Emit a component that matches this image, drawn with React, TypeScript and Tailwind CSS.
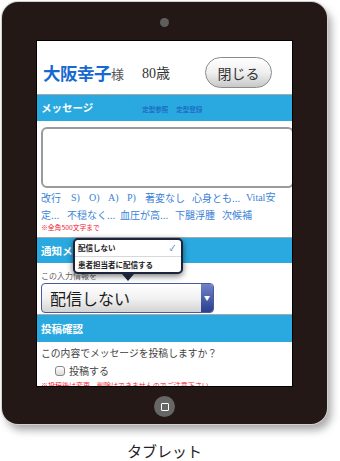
import React from "react";

const jp = { fontFamily: '"Noto Sans CJK JP", "Noto Sans", sans-serif' };
const serifJp = { fontFamily: '"Liberation Serif", "Noto Sans CJK JP", serif' };

function Bar({ title, children, h }: { title: string; children?: React.ReactNode; h: string }) {
  return (
    <div className="flex flex-col">
      <div className="h-[1px] bg-[#a8a8a8]" />
      <div className={`${h} bg-[#2aa9e0] flex items-center pl-[4px]`}>
        <span className="text-[10.5px] font-bold text-white leading-[14px] whitespace-nowrap">{title}</span>
        {children}
      </div>
    </div>
  );
}

export default function App() {
  const row1: [string, string, boolean][] = [
    ["改行", "w-[30px]", false],
    ["S)", "w-[18px]", true],
    ["O)", "w-[19px]", true],
    ["A)", "w-[19px]", true],
    ["P)", "w-[18px]", true],
    ["著変なし", "w-[47px]", false],
    ["心身とも...", "w-[54px]", false],
    ["Vital安", "", true],
  ];
  const row2: [string, string][] = [
    ["定...", "w-[26px]"],
    ["不穏なく...", "w-[53px]"],
    ["血圧が高...", "w-[55px]"],
    ["下腿浮腫", "w-[47px]"],
    ["次候補", ""],
  ];
  return (
    <div className="w-[340px] h-[461px] bg-white overflow-hidden" style={jp}>
      <div className="ml-[2px] mt-[2px] w-[325px] h-[422px] rounded-[16px] bg-[#231815] shadow-[0_0_0_1px_#d0d0d0,4px_6px_8px_rgba(0,0,0,0.35)] flex flex-col items-center">
        <div className="mt-[16px] w-[9px] h-[9px] rounded-full bg-[#5e5e5e]" />
        <div className="mt-[13px] w-[257px] h-[347px] border border-black bg-white overflow-hidden relative flex flex-col">
          {/* header */}
          <div className="h-[53px] shrink-0 flex items-center pt-[10px] pl-[6px]">
            <span className="text-[17.5px] font-bold text-[#1769cf] leading-none tracking-[-0.5px]">大阪幸子</span>
            <span className="text-[13px] text-[#555] leading-none mt-[2px]">様</span>
            <span className="ml-[18px] text-[14px] text-[#333] leading-none mt-[2px]" style={serifJp}>80歳</span>
            <div className="ml-auto mr-[20px] w-[67px] h-[31px] rounded-full border border-[#8a8a8a] bg-gradient-to-b from-white via-[#f0f0f0] to-[#c8c8c8] flex items-center justify-center shadow-[inset_0_1px_0_#fff]">
              <span className="text-[14px] text-[#333] leading-none">閉じる</span>
            </div>
          </div>

          <Bar title="メッセージ" h="h-[26px]">
            <div className="ml-[49px] flex gap-[8px] text-[6.5px] font-bold text-[#1f6fc4] leading-none mt-[3px]">
              <span>定型参照</span>
              <span>定型登録</span>
            </div>
          </Bar>

          <div className="pl-[4px] flex flex-col">
            <div className="mt-[6px] w-[253px] h-[61px] border-2 border-[#9a9a9a] rounded-[6px] bg-white" />
            <div className="mt-[1px] h-[17px] flex items-center text-[10px] text-[#3b82d6] leading-none whitespace-nowrap">
              {row1.map(([t, w, s]) => (
                <span key={t} className={`${w} shrink-0`} style={s ? serifJp : undefined}>
                  {t}
                </span>
              ))}
            </div>
            <div className="h-[17px] flex items-center text-[10px] text-[#3b82d6] leading-none whitespace-nowrap">
              {row2.map(([t, w]) => (
                <span key={t} className={`${w} shrink-0`}>
                  {t}
                </span>
              ))}
            </div>
            <div className="h-[9px] flex items-center text-[6.8px] text-[#ee2233] leading-none whitespace-nowrap">
              ※全角500文字まで
            </div>
          </div>

          <div className="mt-[5px]">
            <Bar title="通知メール" h="h-[25px]" />
          </div>

          <div className="pl-[4px] flex flex-col">
            <div className="mt-[8px] h-[10px] flex items-center text-[8px] text-[#666] leading-none">この入力情報を</div>
            <div className="mt-[2px] w-[173px] h-[30px] rounded-[4px] border border-[#4a5a9a] bg-gradient-to-b from-white via-[#f2f2f2] to-[#d4d4d4] flex items-stretch overflow-hidden">
              <div className="flex-1 flex items-center pl-[8px]">
                <span className="text-[16px] text-[#1a1a1a] leading-none">配信しない</span>
              </div>
              <div className="w-[12px] bg-gradient-to-b from-[#7182c8] to-[#2b3f8e] flex items-center justify-center">
                <span className="text-[6px] text-white leading-none">▼</span>
              </div>
            </div>
          </div>

          <div className="mt-[1px]">
            <Bar title="投稿確認" h="h-[27px]" />
          </div>

          <div className="pl-[4px] flex flex-col">
            <div className="mt-[5px] h-[14px] flex items-center text-[9.8px] text-[#444] leading-none whitespace-nowrap">
              この内容でメッセージを投稿しますか？
            </div>
            <div className="mt-[3px] h-[14px] flex items-center pl-[14px]">
              <div className="w-[10px] h-[10px] rounded-[3px] border border-[#888] bg-gradient-to-b from-white to-[#dcdcdc]" />
              <span className="ml-[4px] text-[10px] text-[#444] leading-none">投稿する</span>
            </div>
            <div className="mt-[2px] h-[10px] flex items-center text-[7px] text-[#ee2233] leading-none whitespace-nowrap">
              ※投稿後は変更、削除はできませんのでご注意下さい
            </div>
          </div>

          {/* popup */}
          <div className="absolute left-[36px] top-[197px] w-[110px] rounded-[5px] border-2 border-[#1b2438] bg-white shadow-[0_2px_6px_rgba(0,0,0,0.55)] flex flex-col">
            <div className="h-[16px] flex items-center justify-between pl-[3px] pr-[6px]">
              <span className="text-[7.5px] font-bold text-[#222] leading-none">配信しない</span>
              <span className="text-[8px] text-[#3060c0] leading-none">✓</span>
            </div>
            <div className="h-[1px] bg-[#d8d8d8]" />
            <div className="h-[15px] flex items-center pl-[3px]">
              <span className="text-[7.5px] font-bold text-[#222] leading-none whitespace-nowrap">患者担当者に配信する</span>
            </div>
            <div className="absolute left-[47px] bottom-[-9px] w-0 h-0 border-l-[6px] border-r-[6px] border-t-[7px] border-l-transparent border-r-transparent border-t-[#1b2438]" />
          </div>
        </div>
        <div className="mt-[9px] w-[21px] h-[21px] rounded-full bg-[#666] flex items-center justify-center">
          <div className="w-[8px] h-[8px] border-[1.5px] border-white rounded-[1px]" />
        </div>
      </div>
      <div className="mt-[17px] w-[329px] text-center text-[15px] text-[#222] leading-[20px]">タブレット</div>
    </div>
  );
}
